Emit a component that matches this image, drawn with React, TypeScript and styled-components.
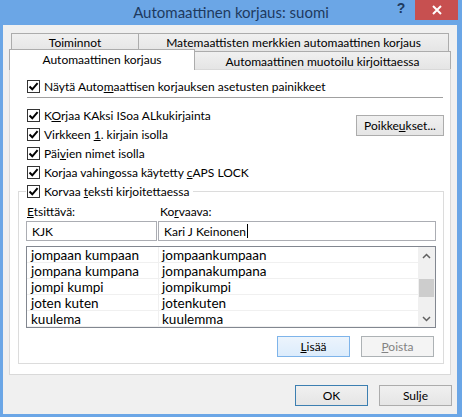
import React from "react";
import styled, { createGlobalStyle, css } from "styled-components";

const FONT = `"Lato", "Liberation Sans", sans-serif`;

const Global = createGlobalStyle`
  html, body { margin: 0; padding: 0; }
  body {
    width: 462px; height: 417px; overflow: hidden;
    font-family: ${FONT}; font-size: 12px; color: #000;
  }
  * { box-sizing: border-box; }
`;

const Window = styled.div`
  width: 462px;
  height: 417px;
  background: #6ba6e6;
  display: flex;
  flex-direction: column;
`;

const TitleBar = styled.div`
  height: 25px;
  flex: none;
  display: grid;
  grid-template-columns: 1fr auto 1fr;
  align-items: start;
`;

const Title = styled.div`
  grid-column: 2;
  font-size: 15px;
  line-height: 25px;
  color: #1e3a5f;
  white-space: nowrap;
`;

const Controls = styled.div`
  grid-column: 3;
  justify-self: end;
  display: flex;
  align-items: flex-start;
  margin-right: 4px;
`;

const HelpBtn = styled.div`
  width: 20px;
  height: 20px;
  margin-right: 4px;
  display: flex;
  align-items: center;
  justify-content: center;
  font-family: "Liberation Sans", sans-serif;
  font-weight: bold;
  font-size: 14px;
  color: #1e3a5f;
  padding-bottom: 4px;
`;

const CloseBtn = styled.div`
  width: 43px;
  height: 20px;
  background: #c75050;
  display: flex;
  align-items: center;
  justify-content: center;
`;

const Client = styled.div`
  flex: 1;
  margin: 0 5px 3px 3px;
  background: #f0f0f0;
  display: flex;
  flex-direction: column;
  padding-top: 8px;
`;

const TabRow = styled.div<{ $front?: boolean }>`
  display: flex;
  align-items: flex-start;
  ${(p) =>
    p.$front
      ? css`
          margin: -3px 0 -1px 6px;
          height: 21px;
          position: relative;
          z-index: 1;
        `
      : css`
          margin-left: 8px;
          height: 19px;
        `}
`;

const Tab = styled.div<{ $w: number; $selected?: boolean; $joined?: boolean }>`
  width: ${(p) => p.$w}px;
  margin-left: ${(p) => (p.$joined ? -1 : 0)}px;
  border: 1px solid #acacac;
  display: flex;
  align-items: center;
  justify-content: center;
  white-space: nowrap;
  ${(p) =>
    p.$selected
      ? css`
          height: 21px;
          background: #fff;
          border-bottom: none;
          padding-bottom: 1px;
        `
      : css`
          height: 19px;
          background: linear-gradient(#f0f0f0, #e5e5e5);
        `}
`;

const FrontTab = styled(Tab)`
  ${(p) =>
    !p.$selected &&
    css`
      margin-top: 2px;
      height: 18px;
      border-bottom: none;
      padding-top: 1px;
    `}
`;

const Panel = styled.div`
  margin: 0 6px 0 6px;
  height: 306px;
  flex: none;
  background: #fff;
  border: 1px solid #d9d9d9;
  display: flex;
  flex-direction: column;
  padding: 7px 6px 0 8px;
`;

const CheckRow = styled.label`
  height: 19px;
  display: flex;
  align-items: center;
  gap: 4px;
  white-space: nowrap;
`;

const TopRow = styled(CheckRow)`
  margin-left: 9px;
`;

const Separator = styled.div`
  height: 1px;
  background: #a0a0a0;
  margin: 1px 1px 8px 9px;
`;

const OptionsBlock = styled.div`
  display: flex;
  justify-content: space-between;
  align-items: flex-start;
  margin-left: 9px;
`;

const OptionList = styled.div`
  display: flex;
  flex-direction: column;
`;

const Box = styled.span`
  width: 13px;
  height: 13px;
  flex: none;
  border: 1px solid #333;
  background: #fff;
  display: flex;
  align-items: center;
  justify-content: center;
`;

const Acc = styled.span`
  text-decoration: underline;
  text-underline-offset: 1px;
`;

const Button = styled.div<{ $variant?: "normal" | "default" | "focus" | "disabled"; $w: number }>`
  width: ${(p) => p.$w}px;
  height: 21px;
  flex: none;
  display: flex;
  align-items: center;
  justify-content: center;
  white-space: nowrap;
  border: 1px solid #acacac;
  background: linear-gradient(#f0f0f0, #e5e5e5);
  color: #000;
  ${(p) =>
    p.$variant === "default" &&
    css`
      border-color: #3c7fb1;
    `}
  ${(p) =>
    p.$variant === "focus" &&
    css`
      border-color: #7eb4ea;
      background: linear-gradient(#ecf4fc, #dcecfc);
    `}
  ${(p) =>
    p.$variant === "disabled" &&
    css`
      border-color: #adb2b5;
      background: #f4f4f4;
      color: #838383;
    `}
`;

const ExceptionsButton = styled(Button)`
  margin-top: 9px;
`;

const Group = styled.fieldset`
  margin: 0;
  border: 1px solid #dcdcdc;
  padding: 2px 7px 6px 7px;
  min-width: 0;
`;

const Legend = styled.legend`
  padding: 0 4px 0 1px;
`;

const FieldLabels = styled.div`
  display: grid;
  grid-template-columns: 133px 1fr;
  height: 17px;
  align-items: center;
  padding-left: 1px;
`;

const Inputs = styled.div`
  display: grid;
  grid-template-columns: 131px 278px;
  gap: 1px;
  margin-top: 1px;
`;

const TextBox = styled.div`
  height: 20px;
  border: 1px solid #abadb3;
  display: flex;
  align-items: center;
  padding-left: 5px;
  white-space: nowrap;
`;

const Caret = styled.span`
  display: inline-block;
  width: 1px;
  height: 14px;
  background: #000;
  margin-left: 1px;
`;

const ListBox = styled.div`
  margin-top: 5px;
  height: 82px;
  border: 1px solid #828790;
  display: flex;
`;

const Rows = styled.div`
  flex: 1;
  display: flex;
  flex-direction: column;
  font-size: 13.5px;
`;

const Row = styled.div`
  height: 16px;
  display: grid;
  grid-template-columns: 132px 1fr;
  border-bottom: 1px solid #f0f0f0;
`;

const Cell = styled.div<{ $first?: boolean }>`
  display: flex;
  align-items: center;
  white-space: nowrap;
  overflow: hidden;
  line-height: 16px;
  padding-left: ${(p) => (p.$first ? 4 : 3)}px;
  border-right: ${(p) => (p.$first ? "1px solid #f0f0f0" : "none")};
`;

const ScrollBar = styled.div`
  width: 17px;
  flex: none;
  background: #f0f0f0;
  display: flex;
  flex-direction: column;
  align-items: center;
`;

const Arrow = styled.div`
  height: 17px;
  width: 17px;
  display: flex;
  align-items: center;
  justify-content: center;
`;

const Track = styled.div`
  flex: 1;
  width: 100%;
  display: flex;
  flex-direction: column;
  align-items: center;
`;

const Thumb = styled.div`
  width: 15px;
  height: 18px;
  margin-top: 15px;
  background: #cdcdcd;
`;

const GroupButtons = styled.div`
  display: flex;
  justify-content: flex-end;
  gap: 11px;
  margin-top: 8px;
  padding-right: 2px;
`;

const DialogButtons = styled.div`
  display: flex;
  justify-content: flex-end;
  gap: 11px;
  margin-top: 10px;
  padding-right: 5px;
`;

const Check = () => (
  <Box>
    <svg width="11" height="11" viewBox="0 0 11 11">
      <path d="M1.5 5.5 L4.3 8.3 L9.6 2.2" fill="none" stroke="#000" strokeWidth="2" />
    </svg>
  </Box>
);

const Opt = ({ children }: { children: React.ReactNode }) => (
  <CheckRow>
    <Check />
    <span>{children}</span>
  </CheckRow>
);

const entries: [string, string][] = [
  ["jompaan kumpaan", "jompaankumpaan"],
  ["jompana kumpana", "jompanakumpana"],
  ["jompi kumpi", "jompikumpi"],
  ["joten kuten", "jotenkuten"],
  ["kuulema", "kuulemma"],
];

export default function App() {
  return (
    <>
      <Global />
      <Window>
        <TitleBar>
          <Title>Automaattinen korjaus: suomi</Title>
          <Controls>
            <HelpBtn>?</HelpBtn>
            <CloseBtn>
              <svg width="10" height="10" viewBox="0 0 10 10">
                <path d="M1 1 L9 9 M9 1 L1 9" stroke="#fff" strokeWidth="2" />
              </svg>
            </CloseBtn>
          </Controls>
        </TitleBar>
        <Client>
          <TabRow>
            <Tab $w={128}>Toiminnot</Tab>
            <Tab $w={311} $joined>
              Matemaattisten merkkien automaattinen korjaus
            </Tab>
          </TabRow>
          <TabRow $front>
            <FrontTab $w={186} $selected>
              Automaattinen korjaus
            </FrontTab>
            <FrontTab $w={257} $joined>
              Automaattinen muotoilu kirjoittaessa
            </FrontTab>
          </TabRow>
          <Panel>
            <TopRow>
              <Check />
              <span>
                Näytä Auto<Acc>m</Acc>aattisen korjauksen asetusten painikkeet
              </span>
            </TopRow>
            <Separator />
            <OptionsBlock>
              <OptionList>
                <Opt>
                  K<Acc>O</Acc>rjaa KAksi ISoa ALkukirjainta
                </Opt>
                <Opt>
                  Virkkeen <Acc>1</Acc>. kirjain isolla
                </Opt>
                <Opt>
                  Päi<Acc>v</Acc>ien nimet isolla
                </Opt>
                <Opt>
                  Korjaa vahingossa käytetty <Acc>c</Acc>APS LOCK
                </Opt>
              </OptionList>
              <ExceptionsButton $w={88}>
                Poikke<Acc>u</Acc>kset...
              </ExceptionsButton>
            </OptionsBlock>
            <Group>
              <Legend>
                <Opt>
                  Korvaa <Acc>t</Acc>eksti kirjoitettaessa
                </Opt>
              </Legend>
              <FieldLabels>
                <span>
                  <Acc>E</Acc>tsittävä:
                </span>
                <span>
                  Ko<Acc>r</Acc>vaava:
                </span>
              </FieldLabels>
              <Inputs>
                <TextBox>KJK</TextBox>
                <TextBox>
                  Kari J Keinonen
                  <Caret />
                </TextBox>
              </Inputs>
              <ListBox>
                <Rows>
                  {entries.map(([a, b]) => (
                    <Row key={a}>
                      <Cell $first>{a}</Cell>
                      <Cell>{b}</Cell>
                    </Row>
                  ))}
                </Rows>
                <ScrollBar>
                  <Arrow>
                    <svg width="9" height="6" viewBox="0 0 9 6">
                      <path d="M1 5 L4.5 1.5 L8 5" fill="none" stroke="#606060" strokeWidth="1.5" />
                    </svg>
                  </Arrow>
                  <Track>
                    <Thumb />
                  </Track>
                  <Arrow>
                    <svg width="9" height="6" viewBox="0 0 9 6">
                      <path d="M1 1 L4.5 4.5 L8 1" fill="none" stroke="#606060" strokeWidth="1.5" />
                    </svg>
                  </Arrow>
                </ScrollBar>
              </ListBox>
              <GroupButtons>
                <Button $w={73} $variant="focus">
                  <span>
                    <Acc>L</Acc>isää
                  </span>
                </Button>
                <Button $w={73} $variant="disabled">
                  <span>
                    <Acc>P</Acc>oista
                  </span>
                </Button>
              </GroupButtons>
            </Group>
          </Panel>
          <DialogButtons>
            <Button $w={73} $variant="default">
              OK
            </Button>
            <Button $w={73}>Sulje</Button>
          </DialogButtons>
        </Client>
      </Window>
    </>
  );
}
